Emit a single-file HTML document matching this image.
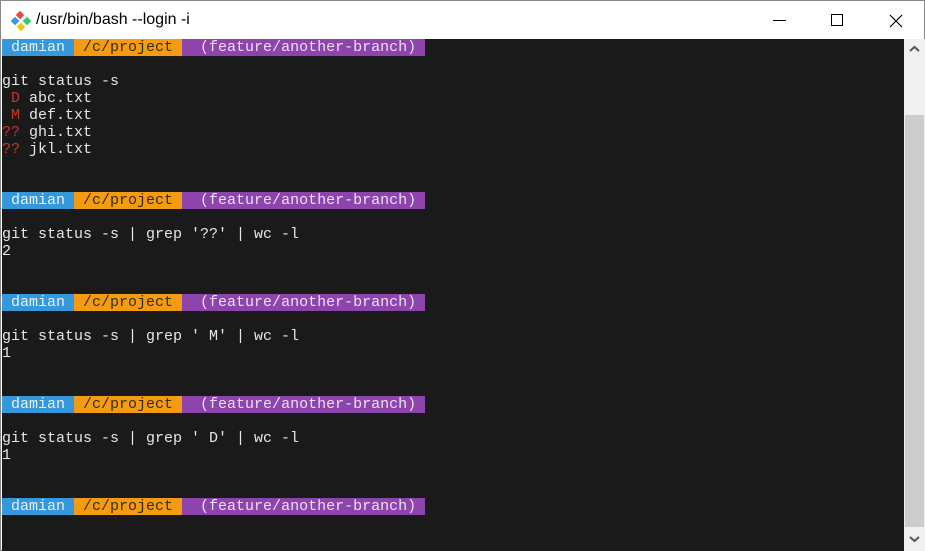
<!DOCTYPE html>
<html><head><meta charset="utf-8"><style>
*{margin:0;padding:0;box-sizing:border-box}
body{width:925px;height:551px;overflow:hidden;background:#fff;position:relative;font-family:"Liberation Sans",sans-serif}
.win{position:absolute;left:0;top:0;width:925px;height:551px;border:1px solid #888}
.title{position:absolute;left:1px;top:1px;width:922px;height:37px;background:#fff}
.title .t{position:absolute;left:34px;top:9px;font-size:16px;color:#000}
.term{position:absolute;left:1px;top:38px;width:902px;height:512px;background:#1a1a1a;overflow:hidden}
.sb{position:absolute;left:903px;top:38px;width:21px;height:512px;background:#f0f0f0}
.thumb{position:absolute;left:1px;top:76px;width:19px;height:412px;background:#cdcdcd}
pre{position:absolute;left:0px;top:0px;font-family:"Liberation Mono",monospace;font-size:15px;line-height:17px;color:#e6e6e6;white-space:pre}
.b{background:#3498db;color:#e8f0f8}
.o{background:#f39c12;color:#3a2a10}
.p{background:#8e44ad;color:#ece0f2}
.r{color:#c0392b}
</style></head><body>
<div class="win">
<div class="title">
<svg style="position:absolute;left:9px;top:9px" width="20" height="20" viewBox="0 0 20 20">
<rect x="3" y="3" width="14" height="14" transform="rotate(45 10 10)" fill="#f5f5f5"/>
<rect x="6" y="1" width="6" height="6" transform="rotate(45 9 4)" fill="#e74c3c"/>
<rect x="1" y="7" width="6" height="6" transform="rotate(45 4 10)" fill="#3498db"/>
<rect x="13" y="7" width="6" height="6" transform="rotate(45 16 10)" fill="#2ecc71"/>
<rect x="7" y="13" width="6" height="6" transform="rotate(45 10 16)" fill="#f1c40f"/>
</svg>
<div class="t">/usr/bin/bash --login -i</div>
<div style="position:absolute;left:771px;top:18px;width:13px;height:1px;background:#000"></div>
<div style="position:absolute;left:829px;top:12px;width:12px;height:12px;border:1px solid #000"></div>
<svg style="position:absolute;left:887px;top:12px" width="14" height="14" viewBox="0 0 14 14"><path d="M1 1L13 13M13 1L1 13" stroke="#000" stroke-width="1.2"/></svg>
</div>
<div class="term"><pre><span class="b"> damian </span><span class="o"> /c/project </span><span class="p">  (feature/another-branch) </span>

git status -s
<span class="r"> D</span> abc.txt
<span class="r"> M</span> def.txt
<span class="r">??</span> ghi.txt
<span class="r">??</span> jkl.txt


<span class="b"> damian </span><span class="o"> /c/project </span><span class="p">  (feature/another-branch) </span>

git status -s | grep '??' | wc -l
2


<span class="b"> damian </span><span class="o"> /c/project </span><span class="p">  (feature/another-branch) </span>

git status -s | grep ' M' | wc -l
1


<span class="b"> damian </span><span class="o"> /c/project </span><span class="p">  (feature/another-branch) </span>

git status -s | grep ' D' | wc -l
1


<span class="b"> damian </span><span class="o"> /c/project </span><span class="p">  (feature/another-branch) </span></pre></div>
<div class="sb">
<svg style="position:absolute;left:5px;top:6px" width="11" height="8" viewBox="0 0 11 8"><path d="M1 6L5.5 2L10 6" stroke="#555" stroke-width="2" fill="none"/></svg>
<div class="thumb"></div>
<svg style="position:absolute;left:5px;top:496px" width="11" height="8" viewBox="0 0 11 8"><path d="M1 2L5.5 6L10 2" stroke="#555" stroke-width="2" fill="none"/></svg>
</div>
</div>
</body></html>
